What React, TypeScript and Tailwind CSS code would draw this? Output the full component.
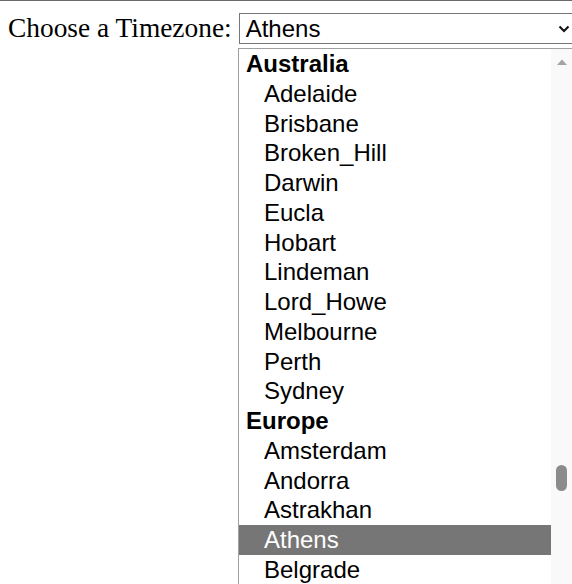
import React from 'react';

type Group = { label: string; zones: string[] };

const groups: Group[] = [
  {
    label: 'Australia',
    zones: ['Adelaide', 'Brisbane', 'Broken_Hill', 'Darwin', 'Eucla', 'Hobart', 'Lindeman', 'Lord_Howe', 'Melbourne', 'Perth', 'Sydney'],
  },
  {
    label: 'Europe',
    zones: ['Amsterdam', 'Andorra', 'Astrakhan', 'Athens', 'Belgrade', 'Berlin'],
  },
];

const selected = 'Athens';

export default function App() {
  return (
    <div className="relative w-[572px] h-[584px] overflow-hidden bg-white border-t border-[#6b6b6b]">
      {/* label + closed select */}
      <div className="flex items-center gap-[7px] pl-2 pt-3 w-[900px]">
        <span
          className="shrink-0 whitespace-nowrap text-[27.4px] leading-[31px] text-black"
          style={{ fontFamily: '"Liberation Serif", serif' }}
        >
          Choose a Timezone:
        </span>
        <div
          className="relative shrink-0 w-[340px] h-[31px] border border-[#767676] bg-white flex items-center pl-[6px] text-[24px] text-black"
          style={{ fontFamily: '"Liberation Sans", Arial, sans-serif' }}
        >
          {selected}
          <svg className="absolute left-[318px] top-[11px]" width="12" height="8" viewBox="0 0 12 8">
            <polyline points="1.5,1.5 6,6 10.5,1.5" fill="none" stroke="#111" strokeWidth="2" />
          </svg>
        </div>
      </div>

      {/* open dropdown list */}
      <div
        className="absolute left-[238px] top-[47px] w-[340px] h-[560px] border border-[#a0a0a0] bg-white flex"
        style={{ fontFamily: '"Liberation Sans", Arial, sans-serif' }}
      >
        <div className="w-[312px] flex flex-col">
          {groups.map(g => (
            <div key={g.label} className="flex flex-col">
              <div className="h-[29.76px] leading-[29.76px] pl-[7px] text-[24px] font-bold text-black">{g.label}</div>
              {g.zones.map(z => (
                <div
                  key={z}
                  className={
                    z === selected
                      ? 'h-[29.76px] leading-[29.76px] pl-[25px] text-[24px] bg-[#767676] text-white'
                      : 'h-[29.76px] leading-[29.76px] pl-[25px] text-[24px] text-black'
                  }
                >
                  {z}
                </div>
              ))}
            </div>
          ))}
        </div>
        <div className="relative w-[22px] h-full bg-[#f9f9f9]">
          <svg className="absolute left-[5px] top-[9px]" width="12" height="8" viewBox="0 0 12 8">
            <polygon points="1,7 6,1.5 11,7" fill="#a3a3a3" />
          </svg>
          <div className="absolute left-[5px] top-[416px] w-[11px] h-[26px] rounded-full bg-[#8b8b8b]" />
        </div>
      </div>
    </div>
  );
}
